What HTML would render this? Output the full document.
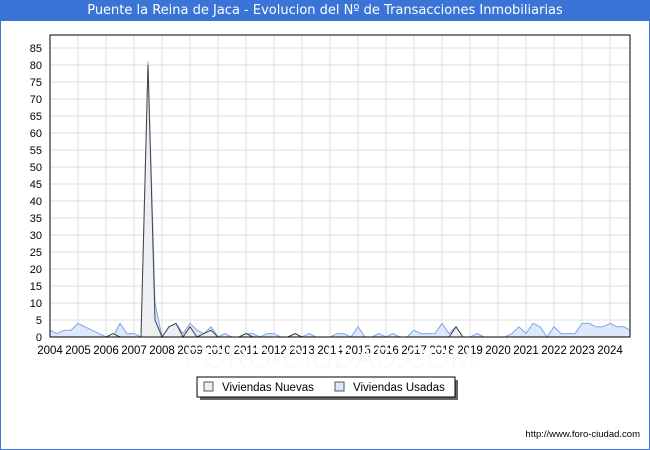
<!DOCTYPE html>
<html><head><meta charset="utf-8"><style>
body{margin:0;width:650px;height:450px;overflow:hidden;font-family:"DejaVu Sans","Liberation Sans",sans-serif;}
#w{position:absolute;left:0;top:0;width:648px;height:448px;border:1px solid #3a74d6;background:#fff}
#t{position:absolute;left:0;top:0;width:650px;height:21px;background:#3a74d6;color:#fff;font-size:13px;text-align:center;line-height:21px}
</style></head><body>
<div id="w"></div><div id="t">Puente la Reina de Jaca - Evolucion del Nº de Transacciones Inmobiliarias</div>
<svg id="s" width="650" height="450" style="position:absolute;left:0;top:0" font-family="Liberation Sans, sans-serif"></svg>
<script>
var s=document.getElementById('s'),h='';
var L=50,R=630,T=35,B=337,k=3.4,dx=(610-50)/20/4;
for(var v=0;v<=85;v+=5){var y=B-v*k;h+='<line x1="'+L+'" x2="'+R+'" y1="'+y+'" y2="'+y+'" stroke="#ddd"/>';h+='<text x="42" y="'+(y+4)+'" font-size="11" text-anchor="end">'+v+'</text>';}
for(var i=0;i<=20;i++){var x=L+i*dx*4;h+='<line x1="'+x+'" x2="'+x+'" y1="'+T+'" y2="'+B+'" stroke="#ddd"/>';h+='<text x="'+(x)+'" y="354" font-size="11.5" text-anchor="middle">'+(2004+i)+'</text>';}
var u=[2,1,2,2,4,3,2,1,0,0,4,1,1,0,81,10,0,3,4,1,4,2,1,3,0,1,0,0,1,1,0,1,1,0,0,1,0,1,0,1,1,0,3,0,0,1,0,1,0,0,2,1,1,1,4,1,3,0,0,1,0,0,0,0,1,3,1,4,3,0,3,1,1,1,4,4,3,3,4,3,3,2,2];
u.splice(38,0,0,0);
var n=[];for(i=0;i<u.length;i++)n.push(0);
n[9]=1;n[14]=80;n[15]=5;n[17]=3;n[18]=4;n[20]=3;n[22]=1;n[23]=2;n[28]=1;n[35]=1;n[58]=3;
function poly(a,fill,stroke){var p='M'+L+','+B;for(var i=0;i<a.length;i++){var x=Math.min(R,L+i*dx),y=B-a[i]*k;p+=' L'+x.toFixed(1)+','+y.toFixed(1);}
var ln=p.replace('M'+L+','+B+' L','M');return '<path d="'+p+' L'+R+','+B+' Z" fill="'+fill+'"/><path d="'+ln+'" fill="none" stroke="'+stroke+'" stroke-width="1"/>';}
h+='<text x="330" y="368" font-size="30" fill="#fafafc" text-anchor="middle">FORO-CIUDAD.COM</text>';
h+=poly(u,'#dde9fb','#7aa6ea');h+=poly(n,'rgba(240,240,240,0.85)','#444');
h+='<rect x="'+L+'" y="'+T+'" width="'+(R-L)+'" height="'+(B-T)+'" fill="none" stroke="#000"/>';
h+='<rect x="200" y="380" width="258" height="20" fill="#666"/><rect x="197" y="377" width="258" height="20" fill="#fff" stroke="#000"/>';
h+='<rect x="204" y="382" width="9" height="9" fill="#eee" stroke="#555"/><text x="222" y="391" font-size="11.5">Viviendas Nuevas</text>';
h+='<rect x="335" y="382" width="9" height="9" fill="#dde9fb" stroke="#555"/><text x="353" y="391" font-size="11.5">Viviendas Usadas</text>';
h+='<text x="640" y="437" font-size="9.5" text-anchor="end">http://www.foro-ciudad.com</text>';
s.innerHTML=h;
</script></body></html>
